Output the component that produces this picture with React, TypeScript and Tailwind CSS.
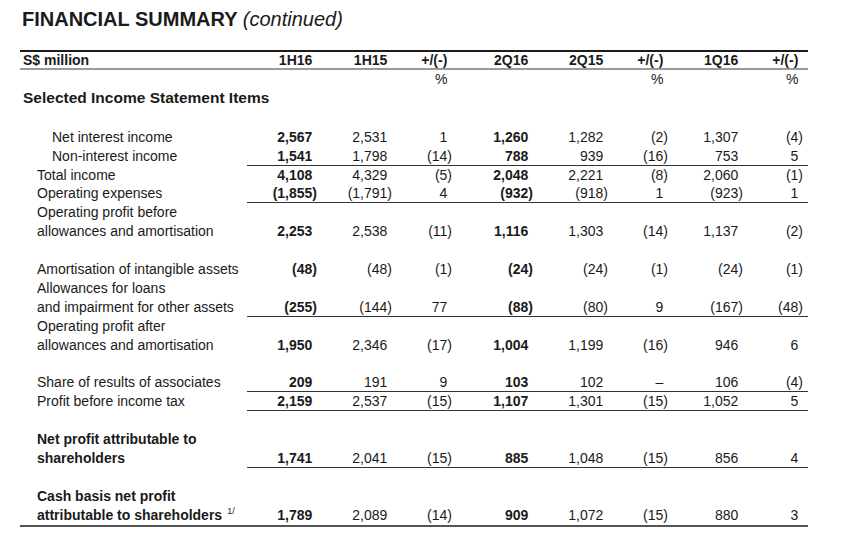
const heads = ["1H16", "1H15", "+/(-)", "2Q16", "2Q15", "+/(-)", "1Q16", "+/(-)"];
const pct = ["", "", "%", "", "", "%", "", "%"];

type Row = {
  label?: string[];
  indent?: boolean;
  bold?: boolean;
  sup?: string;
  values?: string[];
  line?: boolean;
};

const rows: Row[] = [
  { label: ["Net interest income"], indent: true, values: ["2,567", "2,531", "1", "1,260", "1,282", "(2)", "1,307", "(4)"] },
  { label: ["Non-interest income"], indent: true, values: ["1,541", "1,798", "(14)", "788", "939", "(16)", "753", "5"], line: true },
  { label: ["Total income"], values: ["4,108", "4,329", "(5)", "2,048", "2,221", "(8)", "2,060", "(1)"] },
  { label: ["Operating expenses"], values: ["(1,855)", "(1,791)", "4", "(932)", "(918)", "1", "(923)", "1"], line: true },
  { label: ["Operating profit before", "allowances and amortisation"], values: ["2,253", "2,538", "(11)", "1,116", "1,303", "(14)", "1,137", "(2)"] },
  {},
  { label: ["Amortisation of intangible assets"], values: ["(48)", "(48)", "(1)", "(24)", "(24)", "(1)", "(24)", "(1)"] },
  { label: ["Allowances for loans", "and impairment for other assets"], values: ["(255)", "(144)", "77", "(88)", "(80)", "9", "(167)", "(48)"], line: true },
  { label: ["Operating profit after", "allowances and amortisation"], values: ["1,950", "2,346", "(17)", "1,004", "1,199", "(16)", "946", "6"] },
  {},
  { label: ["Share of results of associates"], values: ["209", "191", "9", "103", "102", "–", "106", "(4)"], line: true },
  { label: ["Profit before income tax"], values: ["2,159", "2,537", "(15)", "1,107", "1,301", "(15)", "1,052", "5"], line: true },
  {},
  { label: ["Net profit attributable to", "shareholders"], bold: true, values: ["1,741", "2,041", "(15)", "885", "1,048", "(15)", "856", "4"], line: true },
  {},
  { label: ["Cash basis net profit", "attributable to shareholders"], bold: true, sup: "1/", values: ["1,789", "2,089", "(14)", "909", "1,072", "(15)", "880", "3"] },
];

const cols = "grid grid-cols-[70px_75px_60px_81px_75px_60px_75px_60px] pr-[5px]";

// closing paren hangs past the column edge, so positives get an invisible one
const Num = ({ v, bold }: { v: string; bold?: boolean }) => {
  const neg = v.endsWith(")");
  return (
    <div className={`text-right whitespace-nowrap ${bold ? "font-bold" : ""}`}>
      {neg ? v.slice(0, -1) : v}
      <span className={neg ? "" : "invisible"}>)</span>
    </div>
  );
};

export default function App() {
  return (
    <div
      className="min-h-screen bg-white text-[#1a1a1a] px-[20px]"
      style={{ fontFamily: '"Liberation Sans", Arial, sans-serif' }}
    >
      <h1 className="mt-[7px] ml-[2px] text-[20px] leading-[24px] font-bold">
        FINANCIAL SUMMARY <span className="italic font-normal">(continued)</span>
      </h1>

      <div className="mt-[19px] w-[788px] text-[14px]">
        <div className="flex h-[20px] leading-[16px] border-t-2 border-[#1c1c1c] font-bold">
          <div className="w-[227px] pl-[3px]">S$ million</div>
          <div className={`flex-1 ${cols}`}>
            {heads.map((h, i) => (
              <div key={i} className="text-right">
                {h}
                <span className="invisible">)</span>
              </div>
            ))}
          </div>
        </div>
        <div className="h-[2px] bg-[#9a9a9a] -mt-[2px]" />

        <div className="flex h-[18px] leading-[19.5px]">
          <div className="w-[227px]" />
          <div className={`flex-1 ${cols}`}>
            {pct.map((p, i) => (
              <div key={i} className="text-right">
                {p}
                <span className="invisible">)</span>
              </div>
            ))}
          </div>
        </div>

        <div className="h-[19px] leading-[19px] pl-[3px] text-[15.5px] font-bold whitespace-nowrap">
          Selected Income Statement Items
        </div>
        <div className="h-[20.8px]" />

        {rows.map((r, i) => {
          if (!r.label) return <div key={i} className="h-[18.9px]" />;
          return (
            <div key={i} className="flex items-end leading-[18.9px]">
              <div className={`w-[227px] whitespace-nowrap ${r.indent ? "pl-[32px]" : "pl-[17px]"} ${r.bold ? "font-bold" : ""}`}>
                {r.label.map((l, j) => (
                  <div key={j} className="h-[18.9px]">
                    {l}
                    {r.sup && j === r.label!.length - 1 && (
                      <sup className="text-[9px] font-normal ml-[5px] -top-[6px]">{r.sup}</sup>
                    )}
                  </div>
                ))}
              </div>
              <div className={`flex-1 h-[18.9px] ${cols} ${r.line ? "shadow-[inset_0_-1px_0_#333]" : ""}`}>
                {r.values!.map((v, k) => (
                  <Num key={k} v={v} bold={k === 0 || k === 3} />
                ))}
              </div>
            </div>
          );
        })}
        <div className="h-[2px] bg-[#555]" />
      </div>
    </div>
  );
}
